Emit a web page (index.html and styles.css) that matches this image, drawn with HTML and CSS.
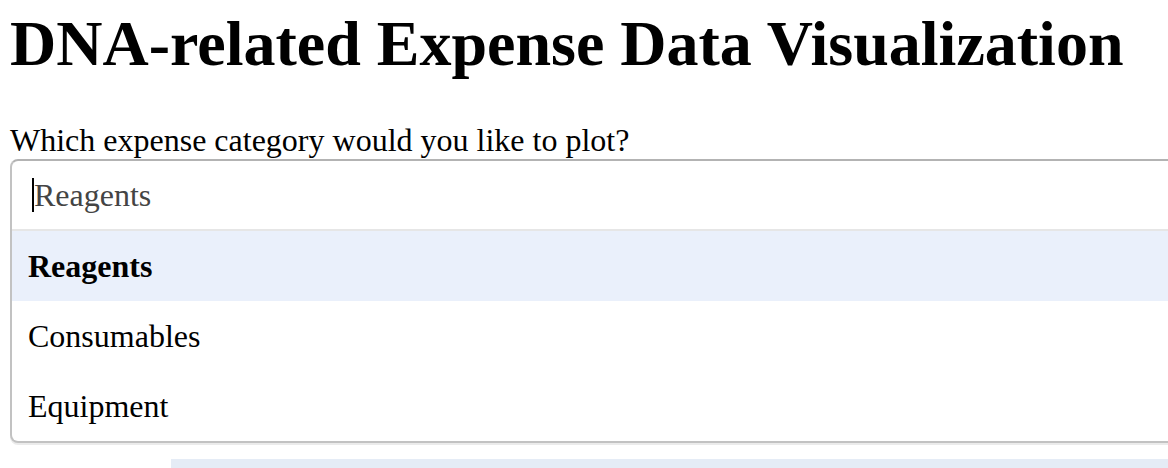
FILE: index.html
```html
<!DOCTYPE html>
<html>
<head>
<meta charset="utf-8">
<link rel="stylesheet" href="styles.css">
</head>
<body>
<div class="page">
  <h1 class="title">DNA-related Expense Data Visualization</h1>
  <label class="label">Which expense category would you like to plot?</label>
  <div class="dropdown">
    <div class="control">
      <span class="caret"></span><span class="value">Reagents</span>
    </div>
    <div class="menu">
      <div class="option focused">Reagents</div>
      <div class="option">Consumables</div>
      <div class="option">Equipment</div>
    </div>
  </div>
  <div class="graph"></div>
</div>
</body>
</html>
```
FILE: styles.css
```css
html, body {
  margin: 0;
  padding: 0;
  overflow: hidden;
  background: #ffffff;
}
body {
  font-family: "Liberation Serif", "Times New Roman", serif;
  color: #000;
}
.page {
  padding: 0 0 0 10px;
  width: 1400px;
}
.title {
  font-size: 64px;
  font-weight: bold;
  margin: 7px 0 41px;
  line-height: normal;
}
.label {
  display: block;
  font-size: 32px;
  line-height: normal;
}
.dropdown {
  width: 1300px;
  border: 2px solid #c2c2c2;
  border-top-color: #b3b3b3;
  border-radius: 8px;
  box-shadow: 0 2px 0 #ebebeb;
  background: #fff;
  font-size: 32px;
}
.control {
  height: 68px;
  display: flex;
  align-items: center;
  padding-left: 20px;
}
.caret {
  display: inline-block;
  width: 2px;
  height: 34px;
  background: #000;
}
.value {
  color: #444;
}
.menu {
  border-top: 2px solid #e6e6e6;
}
.option {
  height: 70px;
  display: flex;
  align-items: center;
  padding-left: 16px;
}
.option.focused {
  background: #eaf0fb;
  font-weight: bold;
}
.graph {
  margin: 16px 0 0 161px;
  height: 200px;
  background: #e5ecf6;
}
```
